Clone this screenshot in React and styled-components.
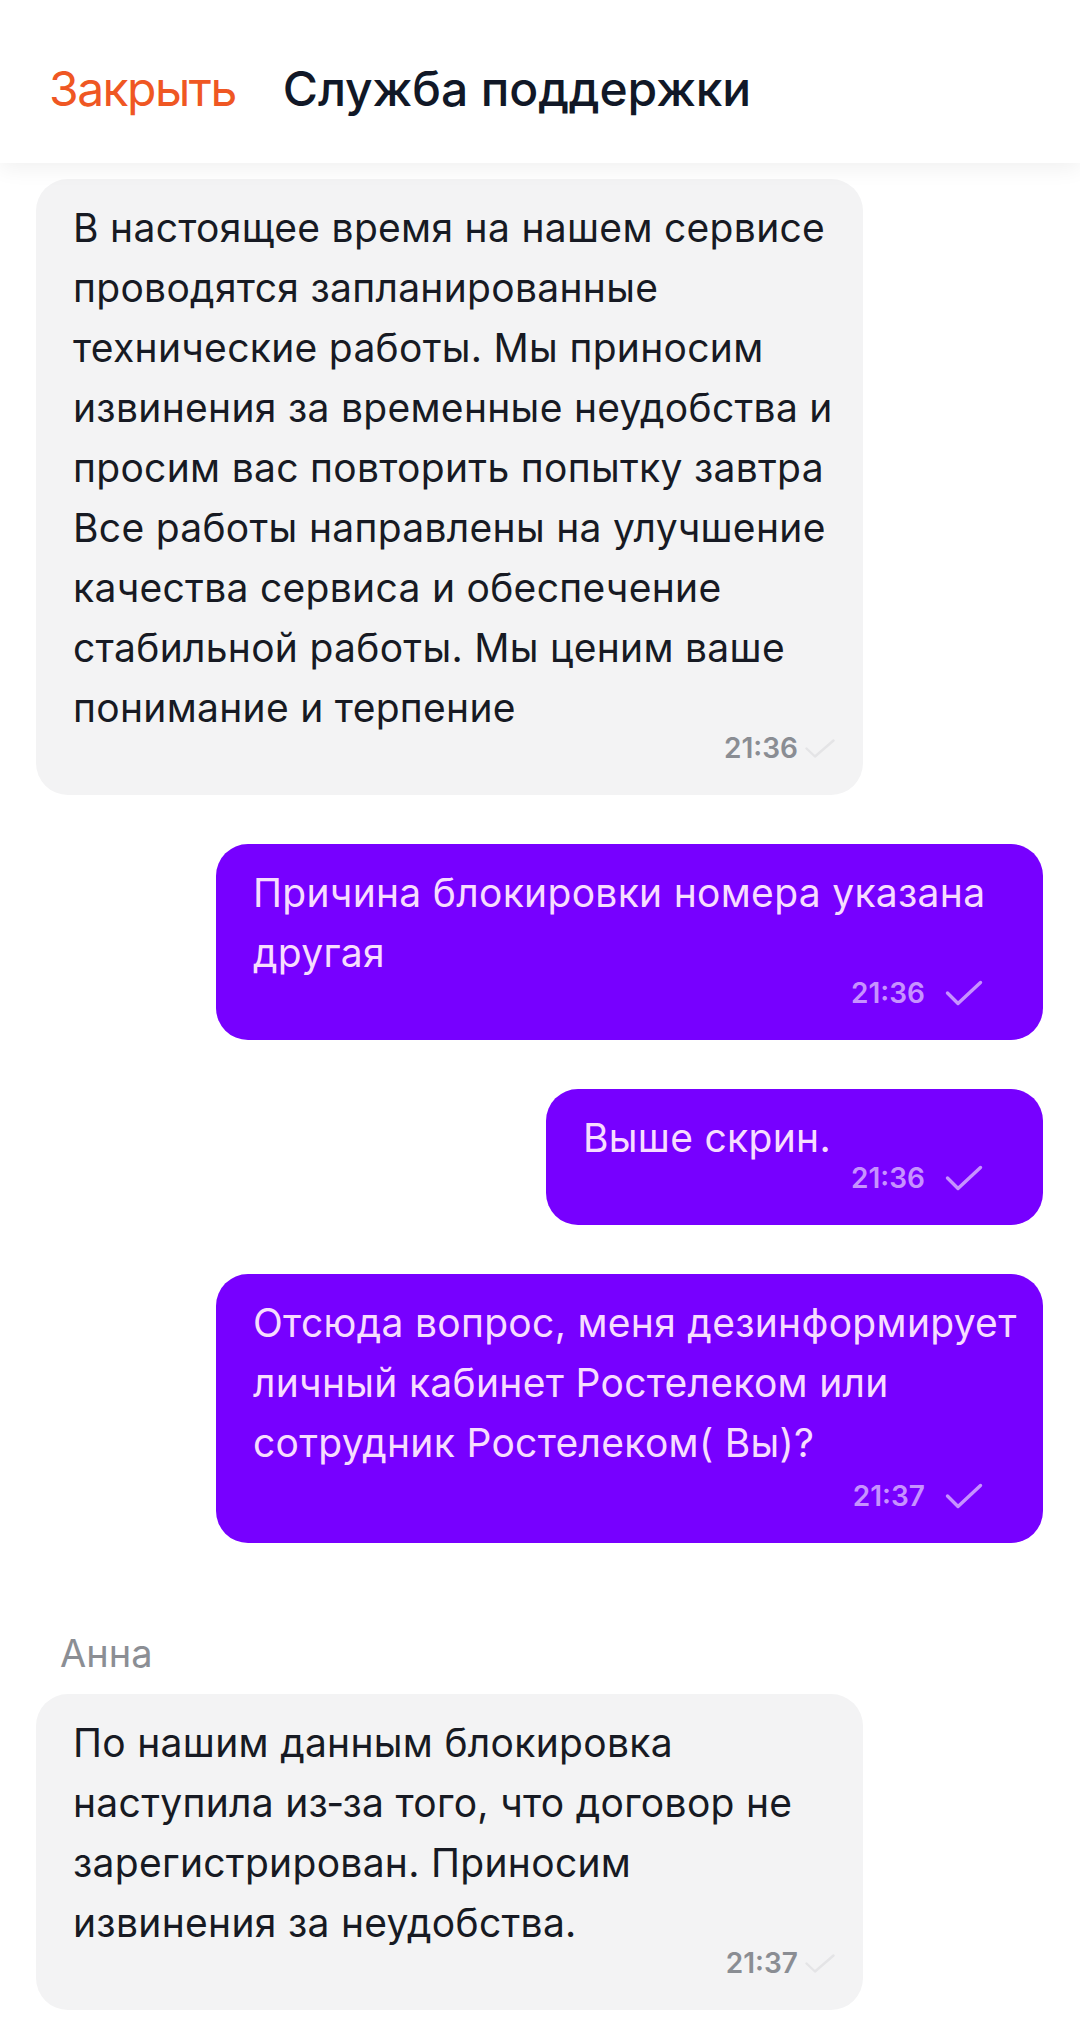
import React from 'react';
import styled, { createGlobalStyle } from 'styled-components';

const GlobalStyle = createGlobalStyle`
  html, body {
    margin: 0;
    padding: 0;
    background: #ffffff;
  }
  body {
    font-family: Inter, "Noto Sans", "Liberation Sans", sans-serif;
    -webkit-font-smoothing: antialiased;
  }
  * { box-sizing: border-box; }
`;

const Page = styled.div`
  width: 1080px;
  height: 2023px;
  overflow: hidden;
  background: #ffffff;
  display: flex;
  flex-direction: column;
`;

const Header = styled.header`
  position: relative;
  z-index: 1;
  flex-shrink: 0;
  height: 163px;
  display: flex;
  align-items: center;
  gap: 47px;
  padding: 14px 0 0 49px;
  background: #ffffff;
  box-shadow: 0 6px 20px rgba(0, 0, 0, 0.06);
`;

const CloseButton = styled.button`
  border: 0;
  background: none;
  padding: 0;
  font-family: Inter, "Noto Sans", sans-serif;
  font-size: 48px;
  font-weight: 400;
  line-height: 1;
  letter-spacing: -1.5px;
  color: #ef5723;
  cursor: pointer;
`;

const Title = styled.h1`
  margin: 0;
  font-size: 48px;
  font-weight: 500;
  line-height: 1;
  letter-spacing: -0.1px;
  color: #111827;
`;

const Feed = styled.main`
  display: flex;
  flex-direction: column;
  gap: 49px;
  padding: 16px 37px 0 36px;
`;

const Group = styled.section`
  display: flex;
  flex-direction: column;
  gap: 18px;
  padding-top: ${(p) => p.$offset || 0}px;
`;

const Author = styled.div`
  padding-left: 24px;
  font-size: 38px;
  line-height: 46px;
  color: #8b8e94;
`;

const Row = styled.div`
  display: flex;
  justify-content: ${(p) => (p.$out ? 'flex-end' : 'flex-start')};
`;

const Bubble = styled.div`
  max-width: 827px;
  padding: 19px 22px 36px 37px;
  border-radius: 32px;
  background: ${(p) => (p.$out ? '#7700ff' : '#f3f3f4')};
  color: ${(p) => (p.$out ? '#f7dcff' : '#171a23')};
`;

const Text = styled.div`
  font-size: 39px;
  line-height: 60px;
  letter-spacing: 0.3px;
  white-space: pre-wrap;
`;

const Spacer = styled.span`
  display: inline-block;
  width: ${(p) => p.$w}px;
  height: 1px;
`;

const Meta = styled.div`
  display: flex;
  justify-content: flex-end;
  align-items: center;
  height: 22px;
  margin-top: ${(p) => -1 + (p.$extra || 0)}px;
  margin-right: ${(p) => (p.$out ? 38 : 6)}px;
  gap: ${(p) => (p.$out ? 20 : 7)}px;
`;

const Time = styled.span`
  font-size: 28px;
  font-weight: 600;
  line-height: 22px;
  color: ${(p) => (p.$out ? '#c792ff' : '#8a8d93')};
`;

const Check = ({ out }) =>
  out ? (
    <svg width="38" height="26" viewBox="0 0 38 26" fill="none">
      <path d="M2.5 13 L13 23.5 L35.5 2.5" stroke="#c792ff" strokeWidth="3.4" strokeLinecap="round" strokeLinejoin="round" />
    </svg>
  ) : (
    <svg width="30" height="19" viewBox="0 0 30 19" fill="none">
      <path d="M1.5 9.5 L10 17.5 L28.5 1.5" stroke="#e4e4e6" strokeWidth="2.4" strokeLinecap="round" strokeLinejoin="round" />
    </svg>
  );

const messages = [
  {
    out: false,
    text:
      'В настоящее время на нашем сервисе проводятся запланированные технические работы. Мы приносим извинения за временные неудобства и просим вас повторить попытку завтра Все работы направлены на улучшение качества сервиса и обеспечение стабильной работы. Мы ценим ваше понимание и терпение',
    time: '21:36',
  },
  { out: true, text: 'Причина блокировки номера указана другая', time: '21:36' },
  { out: true, text: 'Выше скрин.', time: '21:36', spacer: 190 },
  {
    out: true,
    text: 'Отсюда вопрос, меня дезинформирует личный кабинет Ростелеком или сотрудник Ростелеком( Вы)?',
    time: '21:37',
    extra: 13,
  },
];

const reply = {
  author: 'Анна',
  text: 'По нашим данным блокировка наступила из‑за того, что договор не зарегистрирован. Приносим извинения за неудобства.',
  time: '21:37',
};

const Message = ({ out, text, time, spacer, extra }) => (
  <Row $out={out}>
    <Bubble $out={out}>
      <Text>
        {text}
        {spacer ? <Spacer $w={spacer} /> : null}
      </Text>
      <Meta $out={out} $extra={extra}>
        <Time $out={out}>{time}</Time>
        <Check out={out} />
      </Meta>
    </Bubble>
  </Row>
);

export default function App() {
  return (
    <Page>
      <GlobalStyle />
      <Header>
        <CloseButton>Закрыть</CloseButton>
        <Title>Служба поддержки</Title>
      </Header>
      <Feed>
        {messages.map((m, i) => (
          <Message key={i} {...m} />
        ))}
        <Group $offset={38}>
          <Author>{reply.author}</Author>
          <Message out={false} text={reply.text} time={reply.time} />
        </Group>
      </Feed>
    </Page>
  );
}
